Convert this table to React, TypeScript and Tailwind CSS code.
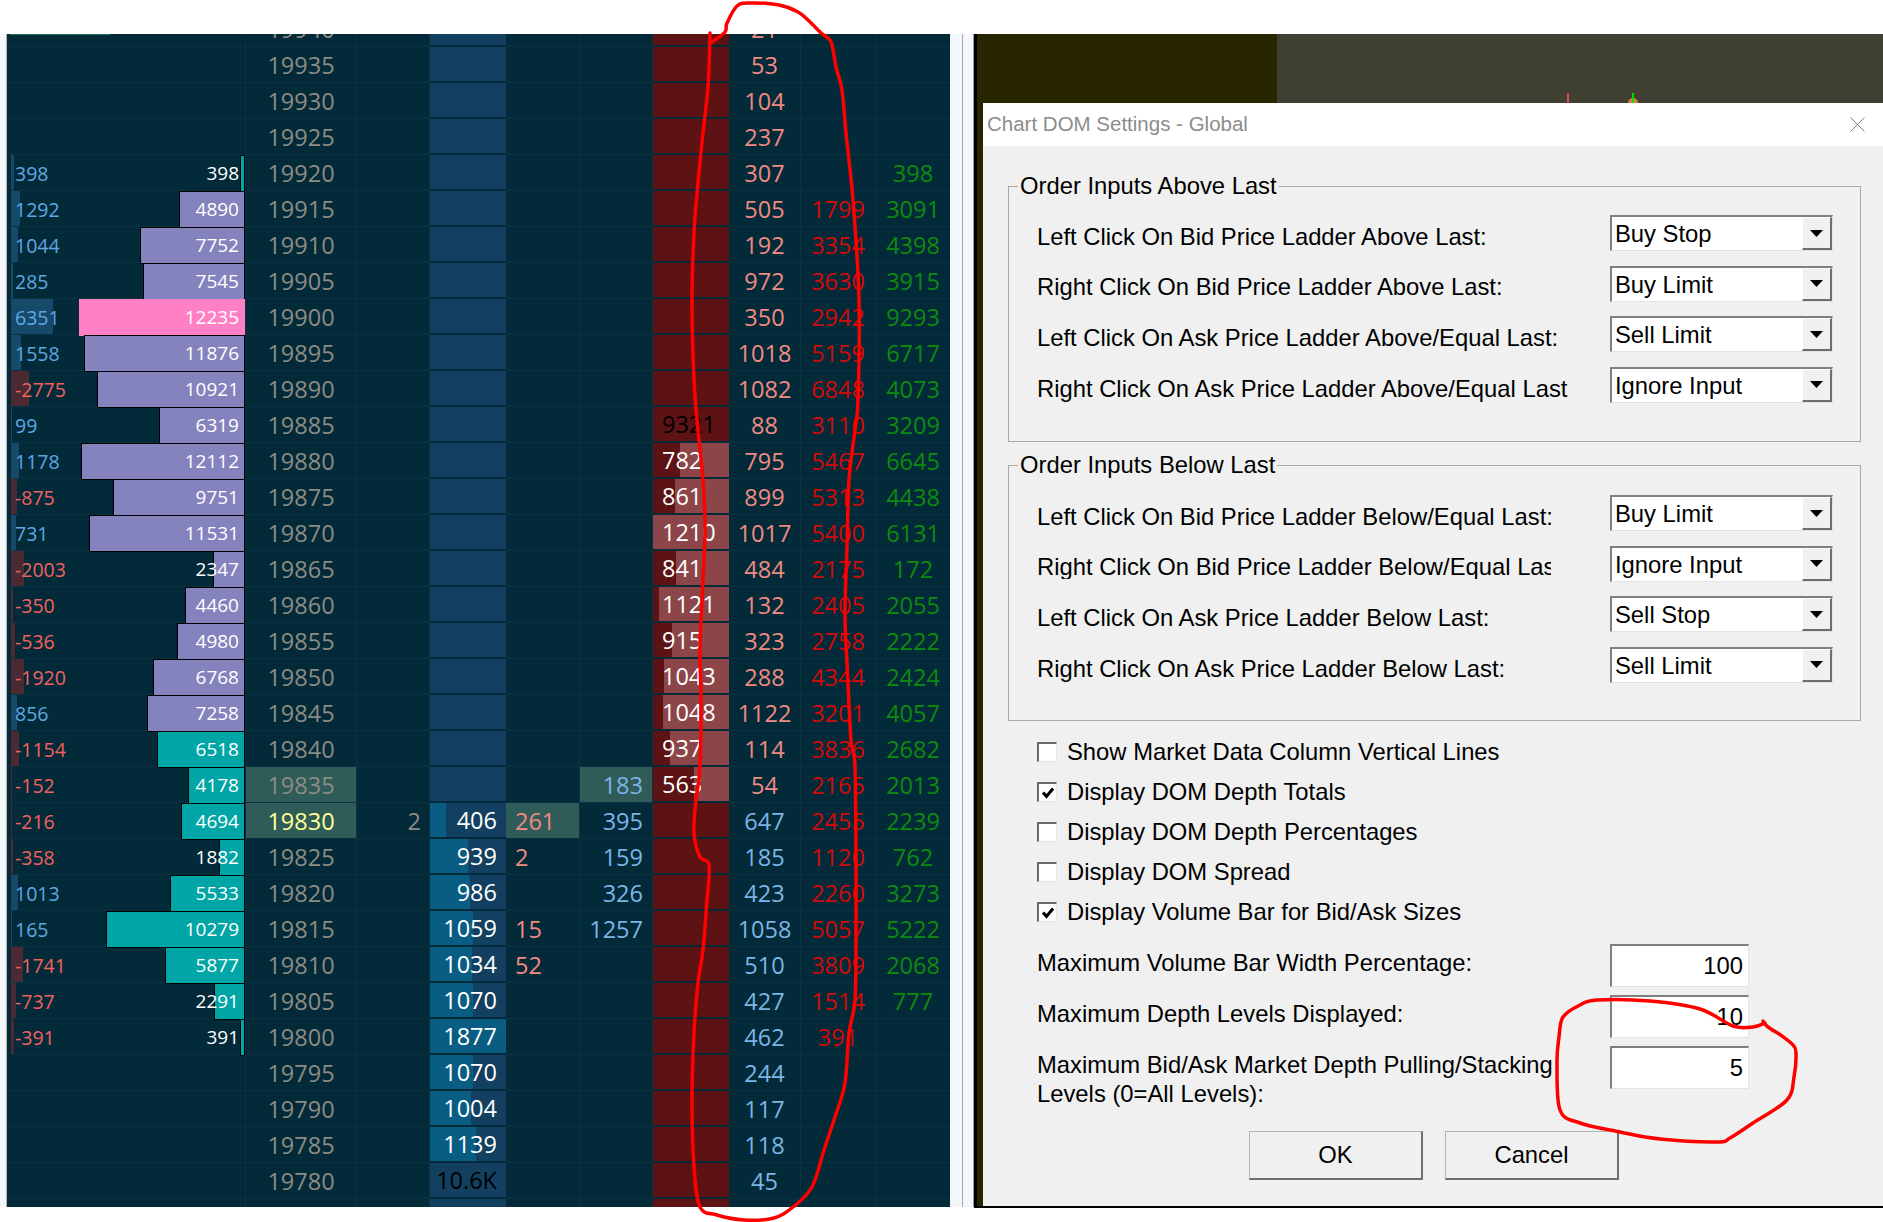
import React from 'react'

type Row = {
  p: string
  hl?: boolean
  last?: boolean
  l?: number
  b?: number
  bc?: 'p' | 'k' | 't'
  c?: string
  bl?: number | string
  e?: string
  eh?: boolean
  f?: string
  fh?: boolean
  r?: number | string
  rDark?: boolean
  h?: string
  hb?: boolean
  i?: string
  j?: string
}

const rows: Row[] = [
  { p: '19940', h: '21' },
  { p: '19935', h: '53' },
  { p: '19930', h: '104' },
  { p: '19925', h: '237' },
  { p: '19920', l: 398, b: 398, bc: 't', h: '307', j: '398' },
  { p: '19915', l: 1292, b: 4890, bc: 'p', h: '505', i: '1799', j: '3091' },
  { p: '19910', l: 1044, b: 7752, bc: 'p', h: '192', i: '3354', j: '4398' },
  { p: '19905', l: 285, b: 7545, bc: 'p', h: '972', i: '3630', j: '3915' },
  { p: '19900', l: 6351, b: 12235, bc: 'k', h: '350', i: '2942', j: '9293' },
  { p: '19895', l: 1558, b: 11876, bc: 'p', h: '1018', i: '5159', j: '6717' },
  { p: '19890', l: -2775, b: 10921, bc: 'p', h: '1082', i: '6848', j: '4073' },
  { p: '19885', l: 99, b: 6319, bc: 'p', r: '9321', rDark: true, h: '88', i: '3110', j: '3209' },
  { p: '19880', l: 1178, b: 12112, bc: 'p', r: 782, h: '795', i: '5467', j: '6645' },
  { p: '19875', l: -875, b: 9751, bc: 'p', r: 861, h: '899', i: '5313', j: '4438' },
  { p: '19870', l: 731, b: 11531, bc: 'p', r: 1210, h: '1017', i: '5400', j: '6131' },
  { p: '19865', l: -2003, b: 2347, bc: 'p', r: 841, h: '484', i: '2175', j: '172' },
  { p: '19860', l: -350, b: 4460, bc: 'p', r: 1121, h: '132', i: '2405', j: '2055' },
  { p: '19855', l: -536, b: 4980, bc: 'p', r: 915, h: '323', i: '2758', j: '2222' },
  { p: '19850', l: -1920, b: 6768, bc: 'p', r: 1043, h: '288', i: '4344', j: '2424' },
  { p: '19845', l: 856, b: 7258, bc: 'p', r: 1048, h: '1122', i: '3201', j: '4057' },
  { p: '19840', l: -1154, b: 6518, bc: 't', r: 937, h: '114', i: '3836', j: '2682' },
  { p: '19835', hl: true, l: -152, b: 4178, bc: 't', f: '183', fh: true, r: 563, h: '54', i: '2165', j: '2013' },
  { p: '19830', hl: true, last: true, l: -216, b: 4694, bc: 't', c: '2', bl: 406, e: '261', eh: true, f: '395', h: '647', hb: true, i: '2455', j: '2239' },
  { p: '19825', l: -358, b: 1882, bc: 't', bl: 939, e: '2', f: '159', h: '185', hb: true, i: '1120', j: '762' },
  { p: '19820', l: 1013, b: 5533, bc: 't', bl: 986, f: '326', h: '423', hb: true, i: '2260', j: '3273' },
  { p: '19815', l: 165, b: 10279, bc: 't', bl: 1059, e: '15', f: '1257', h: '1058', hb: true, i: '5057', j: '5222' },
  { p: '19810', l: -1741, b: 5877, bc: 't', bl: 1034, e: '52', h: '510', hb: true, i: '3809', j: '2068' },
  { p: '19805', l: -737, b: 2291, bc: 't', bl: 1070, h: '427', hb: true, i: '1514', j: '777' },
  { p: '19800', l: -391, b: 391, bc: 't', bl: 1877, h: '462', hb: true, i: '391' },
  { p: '19795', bl: 1070, h: '244', hb: true },
  { p: '19790', bl: 1004, h: '117', hb: true },
  { p: '19785', bl: 1139, h: '118', hb: true },
  { p: '19780', bl: '10.6K', h: '45', hb: true },
  { p: '' },
]

const barClass = {
  p: 'bg-[#8483bd] border border-black',
  k: 'bg-[#ff80c4]',
  t: 'bg-[#00a5a6] border border-black',
}

function DomRow({ row }: { row: Row }) {
  const blueNum = typeof row.bl === 'number'
  const redNum = typeof row.r === 'number'
  return (
    <div className="flex h-[36px] text-[23.5px] leading-none">
      {/* depth / volume */}
      <div className="relative flex h-full w-[239px] items-center justify-between border-b border-r border-[#0a3242] pt-[2px]">
        {row.l !== undefined && (
          <div
            className={`absolute left-[4px] top-0 h-full ${row.l < 0 ? 'bg-[#4b2a31]' : 'bg-[#17496b]'}`}
            style={{ width: Math.max(1, Math.abs(row.l) / 151) }}
          />
        )}
        {row.b !== undefined && row.bc && (
          <div className={`absolute right-0 top-0 h-[37px] ${barClass[row.bc]}`} style={{ width: (row.b / 12235) * 166 }} />
        )}
        <span className={`relative pl-[8px] text-[19.5px] ${row.l !== undefined && row.l < 0 ? 'text-[#f0625e]' : 'text-[#5ea8e2]'}`}>
          {row.l ?? ''}
        </span>
        <span className="relative pr-[6px] text-[19px] text-white">{row.b ?? ''}</span>
      </div>

      {/* price */}
      <div
        className={`flex h-full w-[111px] items-center justify-center border-b border-r border-[#0a3242] pt-[2px] ${row.hl ? 'bg-[#2f5c58]' : ''} ${row.last ? 'text-[#ffff99]' : 'text-[#8c8c84]'}`}
      >
        {row.p}
      </div>

      <div className="flex h-full w-[73px] items-center justify-end border-b border-r border-[#0a3242] pr-[8px] pt-[2px] text-[#8c8c84]">
        {row.c ?? ''}
      </div>

      {/* bid size */}
      <div className="relative flex h-full w-[76px] items-center justify-end border-b-2 border-[#032a39] bg-[#133f60] pr-[9px] pt-[2px]">
        {blueNum && (
          <div className="absolute bottom-0 left-0 top-0 bg-[#0a5d82]" style={{ width: ((row.bl as number) / 1877) * 76 }} />
        )}
        <span className={`relative ${blueNum ? 'text-white' : 'text-black'}`}>{row.bl ?? ''}</span>
      </div>

      <div
        className={`flex h-full w-[74px] items-center border-b border-r border-[#0a3242] pl-[9px] pt-[2px] text-[#f08a82] ${row.eh ? 'bg-[#2f5c58]' : ''}`}
      >
        {row.e ?? ''}
      </div>
      <div
        className={`flex h-full w-[73px] items-center justify-end border-b border-r border-[#0a3242] pr-[9px] pt-[2px] text-[#7bb5e6] ${row.fh ? 'bg-[#2f5c58]' : ''}`}
      >
        {row.f ?? ''}
      </div>

      {/* ask size */}
      <div className="relative flex h-full w-[76px] items-center border-b-2 border-[#032a39] bg-[#5d1214] pl-[9px] pt-[2px]">
        {redNum && (
          <div className="absolute bottom-0 right-0 top-0 bg-[#8c4649]" style={{ width: ((row.r as number) / 1210) * 76 }} />
        )}
        <span className={`relative ${row.rDark ? 'text-black' : 'text-white'}`}>{row.r ?? ''}</span>
      </div>

      <div
        className={`flex h-full w-[72px] items-center justify-center border-b border-r border-[#0a3242] pt-[2px] ${row.hb ? 'text-[#7bb5e6]' : 'text-[#f08a82]'}`}
      >
        {row.h ?? ''}
      </div>
      <div className="flex h-full w-[75px] items-center justify-center border-b border-r border-[#0a3242] pt-[2px] text-[#d10a0a]">
        {row.i ?? ''}
      </div>
      <div className="flex h-full w-[74px] items-center justify-center border-b border-[#0a3242] pt-[2px] text-[#0e8a0e]">
        {row.j ?? ''}
      </div>
    </div>
  )
}

function DomPanel() {
  return (
    <div className="relative h-[1173px] w-[943px] overflow-hidden bg-[#032a39] font-['Open_Sans',sans-serif]">
      <div className="-mt-[23px]">
        {rows.map((row, idx) => (
          <DomRow key={idx} row={row} />
        ))}
      </div>
      <div className="absolute left-[3px] top-0 h-px w-[100px] bg-[#2f6f55]" />
    </div>
  )
}

function Combo({ value }: { value: string }) {
  return (
    <div className="flex h-[36px] w-[223px] border-b border-l-2 border-r border-t-2 border-b-[#e3e3e3] border-l-[#7f7f7f] border-r-[#e3e3e3] border-t-[#7f7f7f] bg-white">
      <div className="flex flex-1 items-center pl-[3px] pt-[1px] leading-none">{value}</div>
      <div className="flex w-[30px] items-center justify-center border-b-2 border-l border-r-2 border-t border-b-[#6e6e6e] border-l-white border-r-[#6e6e6e] border-t-white bg-[#f0f0f0]">
        <svg width="13" height="7" viewBox="0 0 13 7">
          <polygon points="0,0 13,0 6.5,7" fill="#000" />
        </svg>
      </div>
    </div>
  )
}

function OrderRow({ label, value, clip }: { label: string; value: string; clip?: boolean }) {
  return (
    <div className="flex h-[36px] items-center">
      <div className="w-[573px] pt-[7px] leading-none">
        <div className={clip ? 'w-[514px] overflow-hidden whitespace-nowrap' : 'whitespace-nowrap'}>{label}</div>
      </div>
      <Combo value={value} />
    </div>
  )
}

function GroupBox({ title, items, pt }: { title: string; items: { label: string; value: string; clip?: boolean }[]; pt: string }) {
  return (
    <div className="relative h-[256px] w-[853px] border border-[#a9a9a9]">
      <span className="absolute left-[9px] top-[-15px] bg-[#f0f0f0] px-[2px] leading-[28px]">{title}</span>
      <div className={`flex flex-col gap-[14.67px] pl-[28px] ${pt}`}>
        {items.map((it) => (
          <OrderRow key={it.label} {...it} />
        ))}
      </div>
    </div>
  )
}

function Checkbox({ checked, label }: { checked: boolean; label: string }) {
  return (
    <div className="flex h-[40px] items-center gap-[10px] pl-[29px]">
      <div className="flex h-[20px] w-[20px] items-center justify-center border-b border-l-2 border-r border-t-2 border-b-[#e3e3e3] border-l-[#6a6a6a] border-r-[#e3e3e3] border-t-[#6a6a6a] bg-white">
        {checked && (
          <svg width="14" height="14" viewBox="0 0 14 14">
            <polyline points="2,6.5 5.5,10.5 12,2.5" fill="none" stroke="#000" strokeWidth="3" />
          </svg>
        )}
      </div>
      <span className="leading-none">{label}</span>
    </div>
  )
}

function NumField({ value }: { value: string }) {
  return (
    <div className="flex h-[43px] w-[139px] items-center justify-end border-b border-l-2 border-r border-t-2 border-b-[#e3e3e3] border-l-[#7f7f7f] border-r-[#e3e3e3] border-t-[#7f7f7f] bg-white pr-[5px] leading-none">
      {value}
    </div>
  )
}

function WinButton({ label }: { label: string }) {
  return (
    <div className="flex h-[49px] w-[174px] items-center justify-center border-b-2 border-l border-r-2 border-t border-b-[#6e6e6e] border-l-[#b4b4b4] border-r-[#6e6e6e] border-t-[#b4b4b4] bg-[#f0f0f0] leading-none">
      {label}
    </div>
  )
}

function SettingsDialog() {
  return (
    <div className="flex flex-1 flex-col font-['Liberation_Sans',Arial,sans-serif] text-[23.8px] text-black">
      <div className="flex h-[43px] items-center justify-between bg-white pl-[4px] pr-[18px]">
        <span className="text-[20.5px] text-[#8c8c8c]">Chart DOM Settings - Global</span>
        <svg width="15" height="15" viewBox="0 0 15 15">
          <path d="M0.5 0.5 L14.5 14.5 M14.5 0.5 L0.5 14.5" stroke="#808080" strokeWidth="1" />
        </svg>
      </div>
      <div className="flex-1 bg-[#f0f0f0] pl-[25px] pt-[40px]">
        <GroupBox
          title="Order Inputs Above Last"
          pt="pt-[28px]"
          items={[
            { label: 'Left Click On Bid Price Ladder Above Last:', value: 'Buy Stop' },
            { label: 'Right Click On Bid Price Ladder Above Last:', value: 'Buy Limit' },
            { label: 'Left Click On Ask Price Ladder Above/Equal Last:', value: 'Sell Limit' },
            { label: 'Right Click On Ask Price Ladder Above/Equal Last', value: 'Ignore Input' },
          ]}
        />
        <div className="mt-[23px]">
          <GroupBox
            title="Order Inputs Below Last"
            pt="pt-[29px]"
            items={[
              { label: 'Left Click On Bid Price Ladder Below/Equal Last:', value: 'Buy Limit' },
              { label: 'Right Click On Bid Price Ladder Below/Equal Last:', value: 'Ignore Input', clip: true },
              { label: 'Left Click On Ask Price Ladder Below Last:', value: 'Sell Stop' },
              { label: 'Right Click On Ask Price Ladder Below Last:', value: 'Sell Limit' },
            ]}
          />
        </div>

        <div className="mt-[11px] flex flex-col">
          <Checkbox checked={false} label="Show Market Data Column Vertical Lines" />
          <Checkbox checked label="Display DOM Depth Totals" />
          <Checkbox checked={false} label="Display DOM Depth Percentages" />
          <Checkbox checked={false} label="Display DOM Spread" />
          <Checkbox checked label="Display Volume Bar for Bid/Ask Sizes" />
        </div>

        <div className="mt-[12px] flex flex-col gap-[8px]">
          <div className="flex items-start pl-[29px]">
            <div className="w-[573px] pt-[4px] leading-[29px]">Maximum Volume Bar Width Percentage:</div>
            <NumField value="100" />
          </div>
          <div className="flex items-start pl-[29px]">
            <div className="w-[573px] pt-[4px] leading-[29px]">Maximum Depth Levels Displayed:</div>
            <NumField value="10" />
          </div>
          <div className="flex items-start pl-[29px]">
            <div className="w-[573px] pt-[4px] leading-[29px]">
              Maximum Bid/Ask Market Depth Pulling/Stacking
              <br />
              Levels (0=All Levels):
            </div>
            <NumField value="5" />
          </div>
        </div>

        <div className="mt-[23px] flex gap-[22px] pl-[241px]">
          <WinButton label="OK" />
          <WinButton label="Cancel" />
        </div>
      </div>
    </div>
  )
}

function RightPanel() {
  return (
    <div className="flex h-[1174px] w-[909px] flex-col border-b-2 border-l-[3px] border-black">
      <div className="flex h-[69px]">
        <div className="w-[300px] bg-[#282600]" />
        <div className="relative flex-1 bg-[#404032]">
          <svg className="absolute left-0 top-0" width="606" height="69">
            <rect x="290" y="59" width="2" height="10" fill="#d05050" />
            <circle cx="356" cy="69" r="5" fill="#e07a40" />
            <rect x="355" y="59" width="2" height="10" fill="#00e000" />
          </svg>
        </div>
      </div>
      <div className="flex flex-1">
        <div className="w-[6px] bg-[#282600]" />
        <SettingsDialog />
      </div>
    </div>
  )
}

function smooth(pts: number[][]) {
  let d = `M${pts[0][0]} ${pts[0][1]}`
  for (let i = 0; i < pts.length - 1; i++) {
    const p0 = pts[i - 1] || pts[i]
    const p1 = pts[i]
    const p2 = pts[i + 1]
    const p3 = pts[i + 2] || p2
    const c1x = p1[0] + (p2[0] - p0[0]) / 6
    const c1y = p1[1] + (p2[1] - p0[1]) / 6
    const c2x = p2[0] - (p3[0] - p1[0]) / 6
    const c2y = p2[1] - (p3[1] - p1[1]) / 6
    d += ` C${c1x.toFixed(1)} ${c1y.toFixed(1)} ${c2x.toFixed(1)} ${c2y.toFixed(1)} ${p2[0]} ${p2[1]}`
  }
  return d
}

const domLoop = [
  [712, 42], [725, 32], [727, 23], [737, 6], [750, 3], [779, 5], [798, 12], [811, 23], [821, 33], [831, 42],
  [836, 67], [842, 90], [846, 133], [853, 200], [859, 300], [858, 400], [855, 430], [849, 480], [847, 547],
  [845, 613], [847, 663], [851, 740], [855, 767], [856, 867], [856, 933], [855, 1000], [849, 1033], [845, 1083],
  [835, 1117], [824, 1150], [812, 1187], [793, 1207], [774, 1218], [744, 1220], [717, 1215], [700, 1207],
  [694, 1167], [692, 1100], [694, 1033], [698, 983], [703, 950], [707, 900], [709, 865], [700, 857], [694, 833],
  [696, 800], [700, 767], [701, 700], [700, 647], [703, 580], [705, 530], [703, 480], [698, 430], [694, 380],
  [692, 300], [694, 233], [698, 183], [703, 133], [708, 87], [710, 33],
]

const fieldLoop = [
  [1765, 1023], [1753, 1027], [1733, 1026], [1700, 1009], [1650, 1001], [1597, 1000], [1580, 1005], [1563, 1017],
  [1559, 1037], [1557, 1063], [1560, 1110], [1580, 1123], [1620, 1132], [1660, 1139], [1717, 1142], [1730, 1138],
  [1753, 1123], [1787, 1100], [1794, 1077], [1796, 1053], [1793, 1045], [1782, 1036], [1768, 1027], [1763, 1021],
]

export default function App() {
  return (
    <div className="relative h-[1222px] w-[1883px] overflow-hidden bg-white">
      <div className="h-[34px]" />
      <div className="flex h-[1174px] items-start">
        <div className="h-[1173px] w-[7px] border-r border-[#b5b5b5] bg-[#f3f6fa]" />
        <DomPanel />
        <div className="flex h-[1173px] w-[24px] bg-[#f3f6fa]">
          <div className="ml-[12px] h-full w-px bg-[#a6a6a6]" />
          <div className="ml-[10px] h-full w-px bg-[#9a9a9a]" />
        </div>
        <RightPanel />
      </div>

      {/* hand-drawn annotations */}
      <svg className="pointer-events-none absolute left-0 top-0" width="1883" height="1222">
        <path d={smooth(domLoop)} fill="none" stroke="#ff0000" strokeWidth="3.5" strokeLinecap="round" strokeLinejoin="round" />
        <path d={smooth(fieldLoop)} fill="none" stroke="#ff0000" strokeWidth="3.5" strokeLinecap="round" strokeLinejoin="round" />
      </svg>
    </div>
  )
}
